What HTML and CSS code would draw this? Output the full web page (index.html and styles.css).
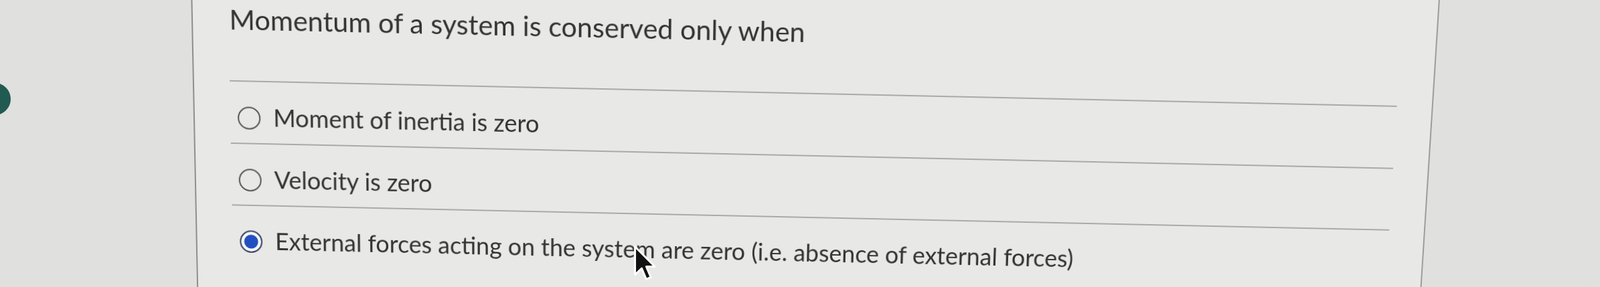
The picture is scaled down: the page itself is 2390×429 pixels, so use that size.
FILE: index.html
```html
<!DOCTYPE html>
<html lang="en">
<head>
<meta charset="utf-8">
<title>Quiz question</title>
<link rel="stylesheet" href="styles.css">
</head>
<body>
<div class="viewport">
  <div class="screen">
    <aside class="gutter gutter-left"></aside>
    <main class="card">
      <h1 class="question">Momentum of a system is conserved only when</h1>
      <ul class="answers">
        <li class="answer"><span class="radio"></span><span class="label">Moment of inertia is zero</span></li>
        <li class="answer"><span class="radio"></span><span class="label">Velocity is zero</span></li>
        <li class="answer"><span class="radio radio-checked"></span><span class="label">External forces acting on the system are zero (i.e. absence of external forces)</span></li>
      </ul>
    </main>
    <aside class="gutter gutter-right"></aside>
  </div>
  <div class="fab"></div>
  <svg class="cursor" viewBox="0 0 13 21" width="34" height="55" aria-hidden="true">
    <path d="M1 1 L1 17 L4.8 13.4 L7.4 19.6 L10 18.5 L7.4 12.4 L12.3 12.4 Z" fill="#111" stroke="#fff" stroke-width="1.1" stroke-linejoin="round"/>
  </svg>
</div>
</body>
</html>
```
FILE: styles.css
```css
html, body {
  margin: 0;
  height: 100%;
  overflow: hidden;
  background: #e0e0de;
}

.viewport {
  position: relative;
  width: 2390px;
  height: 429px;
  overflow: hidden;
}

.screen {
  display: flex;
  width: 2390px;
  height: 509px;
  margin-top: -40px;
  transform-origin: 1218px 254px;
  transform: perspective(1500px) rotateX(-3.9deg) rotate(1.25deg);
  filter: blur(0.6px);
  font-family: Lato, "Noto Sans", sans-serif;
}

.gutter-left {
  flex: 0 0 290px;
  background: #e0e0de;
}

.gutter-right {
  flex: 1 1 auto;
  background: #e0e0de;
}

.card {
  flex: 0 0 1847px;
  box-sizing: border-box;
  border-left: 2px solid #8e8e8e;
  border-right: 2px solid #9c9c9c;
  background: #e8e8e6;
  padding: 64px 52px 0 53px;
}

.question {
  margin: 0 0 66px 1px;
  font-size: 41px;
  line-height: 49px;
  font-weight: 400;
  color: #333;
}

.answers {
  list-style: none;
  margin: 0;
  padding: 0;
}

.answer {
  display: flex;
  align-items: center;
  gap: 19px;
  border-top: 2px solid #a9a9a9;
  padding: 32px 0 19px 11px;
  font-size: 36px;
  line-height: 40px;
  color: #333;
}

.radio {
  flex: none;
  width: 34px;
  height: 34px;
  margin-top: 4px;
  box-sizing: border-box;
  border: 2.5px solid #555;
  border-radius: 50%;
}

.radio-checked {
  border-color: #3d4763;
  background: #2350c0;
  box-shadow: inset 0 0 0 4.5px #f8f8f8;
}

.fab {
  position: absolute;
  left: -32px;
  top: 124px;
  width: 48px;
  height: 48px;
  border-radius: 50%;
  background: #215a50;
}

.cursor {
  position: absolute;
  left: 946px;
  top: 366px;
}
```
